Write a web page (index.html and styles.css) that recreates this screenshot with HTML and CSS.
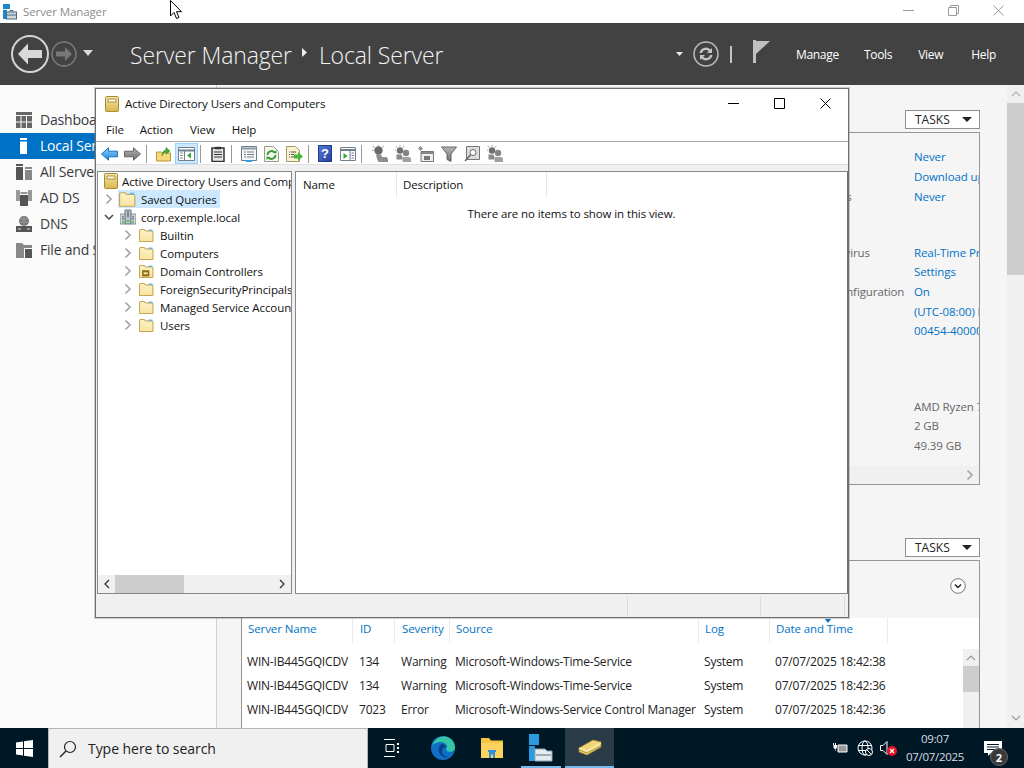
FILE: index.html
```html
<!DOCTYPE html>
<html lang="en">
<head>
<meta charset="utf-8">
<title>Server Manager</title>
<link rel="stylesheet" href="styles.css">
</head>
<body>
<svg class="defs" width="0" height="0" aria-hidden="true">
  <defs>
    <linearGradient id="gBook" x1="0" y1="0" x2="0" y2="1"><stop offset="0" stop-color="#f6e7a8"/><stop offset="1" stop-color="#d9b650"/></linearGradient>
    <linearGradient id="gFolder" x1="0" y1="0" x2="0" y2="1"><stop offset="0" stop-color="#fdf3c9"/><stop offset="1" stop-color="#f9e3a0"/></linearGradient>
    <linearGradient id="gBlue" x1="0" y1="0" x2="0" y2="1"><stop offset="0" stop-color="#8fd0fb"/><stop offset="1" stop-color="#1d86dc"/></linearGradient>
    <linearGradient id="gGrey" x1="0" y1="0" x2="0" y2="1"><stop offset="0" stop-color="#b5b5b5"/><stop offset="1" stop-color="#6f6f6f"/></linearGradient>
    <linearGradient id="gHelp" x1="0" y1="0" x2="1" y2="1"><stop offset="0" stop-color="#5a79d8"/><stop offset="1" stop-color="#23409c"/></linearGradient>
    <symbol id="folder" viewBox="1 1 14.500 12.500"><path d="M1.500 12.500V2.500q0-1 1-1h3.500l1.500 1.500h6q1 0 1 1v8.500q0 .5-.5.5H2q-.5 0-.5-.5z" fill="url(#gFolder)" stroke="#c8a64c"/><path d="M10 1.500h4v1.500h-4z" fill="#6fb2e6"/></symbol>
    <symbol id="book" viewBox="0 0 14 16"><rect x=".5" y=".5" width="13" height="15" rx="1" fill="url(#gBook)" stroke="#a98b34"/><rect x="3" y="3" width="8" height="3" fill="#fff8d8" stroke="#8a7430" stroke-width=".7"/></symbol>
    <symbol id="chevr" viewBox="0 0 8 12"><path d="M1.500 1.500 6 6l-4.500 4.500" fill="none" stroke="#a6a6a6" stroke-width="1.700"/></symbol>
    <symbol id="user" viewBox="0 0 16 17"><circle cx="6.500" cy="5.500" r="4.200" fill="#6a6a6a"/><path d="M2.500 2.500 .8.800M6.500 1V0M10.500 2.500l1.500-1.700M1.500 5.500H0" stroke="#9a9a9a"/><path d="M4 9.500h5l1 2.500h4.500q1.500 1 1.500 2.500V17H6.500L5 14z" fill="#8f8f8f"/></symbol>
    <symbol id="users" viewBox="0 0 16 17"><circle cx="5" cy="5.500" r="3.200" fill="#707070"/><circle cx="11" cy="8" r="3.200" fill="#858585"/><path d="M2 2.500 .8 1M5 1.500V0M8 2.500 9.200 1M1 5H0" stroke="#9a9a9a"/><path d="M1.500 9.500h5l1 3v2h-6z" fill="#8a8a8a"/><path d="M7.500 12h7q1.500.8 1.500 2.500V17H7.500z" fill="#a0a0a0"/></symbol>
  </defs>
</svg>

<div class="sm">
  <div class="sm-title">
    <svg class="sm-logo" width="14" height="18" viewBox="0 0 14 18"><path d="M0 2h7v5H0zM0 8h4v9H0z" fill="#1f86c9"/><rect x="3.500" y="10" width="10" height="7" fill="#cfd8df" stroke="#456c88"/><path d="M7 10V8.500h3V10" fill="none" stroke="#456c88"/><path d="M4 13h9" stroke="#456c88"/></svg>
    <span class="sm-title-text">Server Manager</span>
    <span class="grow"></span>
    <svg class="wc" width="11" height="11" viewBox="0 0 11 11"><path d="M0 5.500h11" stroke="#9a9a9a"/></svg>
    <svg class="wc" width="11" height="11" viewBox="0 0 11 11"><path d="M.5 2.500h8v8h-8zM2.500 2.500v-2h8v8h-2" fill="none" stroke="#9a9a9a"/></svg>
    <svg class="wc" width="11" height="11" viewBox="0 0 11 11"><path d="M.5.500l10 10M10.500.500l-10 10" stroke="#9a9a9a"/></svg>
  </div>

  <header class="sm-head">
    <svg class="nav-back" width="40" height="40" viewBox="0 0 40 40"><circle cx="20" cy="20" r="18" fill="none" stroke="#d4d4d4" stroke-width="2"/><path d="M8 20l10-10.500v6.500h14v8H18v6.500z" fill="#d9d9d9"/></svg>
    <svg class="nav-fwd" width="26" height="26" viewBox="0 0 26 26"><circle cx="13" cy="13" r="12" fill="none" stroke="#7a7a7a" stroke-width="1.500"/><path d="M21 13l-7-7v4.500H5v5h9V20z" fill="#777"/></svg>
    <svg class="nav-drop" width="10" height="6" viewBox="0 0 10 6"><path d="M0 0h10L5 6z" fill="#d8d8d8"/></svg>
    <h1 class="crumb">Server Manager<svg class="crumb-sep" width="5" height="9" viewBox="0 0 5 9"><path d="M0 0l5 4.500-5 4.500z" fill="#eee"/></svg>Local Server</h1>
    <span class="grow"></span>
    <svg class="rf-drop" width="7" height="4" viewBox="0 0 7 4"><path d="M0 0h7L3.500 4z" fill="#e8e8e8"/></svg>
    <svg class="refresh" width="26" height="26" viewBox="0 0 26 26"><circle cx="13" cy="13" r="12" fill="none" stroke="#bdbdbd" stroke-width="1.500"/><path d="M6.500 12a6.500 6.500 0 0 1 11-3.500l1.500-1.500v5h-5l1.800-1.800A4 4 0 0 0 9 12zM19.500 14a6.500 6.500 0 0 1-11 3.500L7 19v-5h5l-1.800 1.800A4 4 0 0 0 17 14z" fill="#c4c4c4"/></svg>
    <span class="head-bar"></span>
    <svg class="flag" width="17" height="23" viewBox="0 0 17 23"><path d="M0 0h3v23H0z" fill="#c0c0c0"/><path d="M3 1h14L3 14z" fill="#c0c0c0"/></svg>
    <nav class="head-menu"><span class="hm-manage">Manage</span><span class="hm-tools">Tools</span><span class="hm-view">View</span><span class="hm-help">Help</span></nav>
  </header>

  <div class="sm-body">
    <aside class="side">
      <div class="side-item">
        <svg width="16" height="16" viewBox="0 0 16 16"><path d="M0 0h16v3H0zM0 4h4.500v5.500H0zM5.500 4h4.500v5.500H5.500zM11 4h5v5.500h-5zM0 10.500h4.500V16H0zM5.500 10.500h4.500V16H5.500zM11 10.500h5V16h-5z" fill="#666"/></svg>
        <span>Dashboard</span>
      </div>
      <div class="side-item active">
        <svg width="16" height="16" viewBox="0 0 16 16"><path d="M4 0h7v2H4zM4 3.500h7V16H4z" fill="#fff"/></svg>
        <span>Local Server</span>
      </div>
      <div class="side-item">
        <svg width="16" height="16" viewBox="0 0 16 16"><path d="M0 0h7v2H0zM0 3h7v13H0z" fill="#555"/><path d="M9 3h7v2H9zM9 6h7v10H9z" fill="#888"/></svg>
        <span>All Servers</span>
      </div>
      <div class="side-item">
        <svg width="16" height="16" viewBox="0 0 16 16"><path d="M0 0h4v11H0zM12 0h4v11h-4zM4.500 2h7v2h-7z" fill="#999"/><path d="M4 5h8v11H4z" fill="#555"/></svg>
        <span>AD DS</span>
      </div>
      <div class="side-item">
        <svg width="16" height="16" viewBox="0 0 16 16"><circle cx="8" cy="5" r="5" fill="#777"/><path d="M4 3h8M3.500 6h9M8 0v10" stroke="#aaa" stroke-width=".7"/><path d="M0 10h16v6H0z" fill="#555"/><path d="M2 13h3M11 13h3" stroke="#ddd"/></svg>
        <span>DNS</span>
      </div>
      <div class="side-item">
        <svg width="16" height="16" viewBox="0 0 16 16"><path d="M0 1h6l2 2h8v3H8v10H0z" fill="#888"/><path d="M9 7h7v9H9z" fill="#555"/></svg>
        <span>File and Storage Services</span>
      </div>
    </aside>

    <main class="main">
      <div class="tasks-row"><span class="tasks">TASKS<i class="tasks-arrow"></i></span></div>
      <section class="panel props">
        <div class="props-body">
          <div class="info-row"><span>Last installed updates</span><span class="val">Never</span></div>
          <div class="info-row"><span>Windows Update</span><span class="val">Download updates only</span></div>
          <div class="info-row"><span>Last checked for updates</span><span class="val">Never</span></div>
          <div class="info-row gap-a"><span>Windows Defender Antivirus</span><span class="val">Real-Time Protection: On</span></div>
          <div class="info-row"><span>Feedback &amp; Diagnostics</span><span class="val">Settings</span></div>
          <div class="info-row"><span>IE Enhanced Security Configuration</span><span class="val">On</span></div>
          <div class="info-row"><span>Time zone</span><span class="val">(UTC-08:00) Pacific Time</span></div>
          <div class="info-row"><span>Product ID</span><span class="val">00454-40000-00001-AA</span></div>
          <div class="info-row gap-b"><span>Processors</span><span class="val plain">AMD Ryzen 7</span></div>
          <div class="info-row"><span>Installed memory (RAM)</span><span class="val plain">2 GB</span></div>
          <div class="info-row"><span>Total disk space</span><span class="val plain">49.39 GB</span></div>
        </div>
        <div class="props-scroll"><svg width="8" height="12"><use href="#chevr"/></svg></div>
      </section>

      <div class="tasks-row second"><span class="tasks">TASKS<i class="tasks-arrow"></i></span></div>
      <section class="panel events">
        <div class="events-top">
          <svg width="16" height="16" viewBox="0 0 16 16"><circle cx="8" cy="8" r="7.300" fill="#fff" stroke="#777"/><path d="M5 6.500l3 3 3-3" fill="none" stroke="#222" stroke-width="1.500"/></svg>
        </div>
        <div class="log-head">
          <span>Server Name</span><span>ID</span><span>Severity</span><span>Source</span><span>Log</span><span class="sorted">Date and Time</span>
        </div>
        <div class="log-main">
          <div class="log-rows">
            <div class="log-row"><span>WIN-IB445GQICDV</span><span>134</span><span>Warning</span><span>Microsoft-Windows-Time-Service</span><span>System</span><span>07/07/2025 18:42:38</span></div>
            <div class="log-row"><span>WIN-IB445GQICDV</span><span>134</span><span>Warning</span><span>Microsoft-Windows-Time-Service</span><span>System</span><span>07/07/2025 18:42:36</span></div>
            <div class="log-row"><span>WIN-IB445GQICDV</span><span>7023</span><span>Error</span><span>Microsoft-Windows-Service Control Manager</span><span>System</span><span>07/07/2025 18:42:36</span></div>
          </div>
          <div class="log-scroll">
            <svg class="up" width="10" height="6" viewBox="0 0 10 6"><path d="M1 5l4-4 4 4" fill="none" stroke="#9a9a9a" stroke-width="1.200"/></svg>
            <div class="log-thumb"></div>
          </div>
        </div>
      </section>
    </main>

    <div class="main-scroll">
      <svg class="up" width="10" height="6" viewBox="0 0 10 6"><path d="M1 5l4-4 4 4" fill="none" stroke="#b0b0b0" stroke-width="1.200"/></svg>
      <div class="main-thumb"></div>
      <span class="grow"></span>
      <svg class="down" width="10" height="6" viewBox="0 0 10 6"><path d="M1 1l4 4 4-4" fill="none" stroke="#9a9a9a" stroke-width="1.200"/></svg>
    </div>
  </div>
</div>

<div class="mmc">
  <div class="mmc-title">
    <svg width="14" height="16"><use href="#book"/></svg>
    <span class="mmc-title-text">Active Directory Users and Computers</span>
    <span class="grow"></span>
    <svg class="mwc" width="11" height="11" viewBox="0 0 11 11"><path d="M0 5.500h11" stroke="#000"/></svg>
    <svg class="mwc" width="11" height="11" viewBox="0 0 11 11"><path d="M.5.500h10v10H.5z" fill="none" stroke="#000"/></svg>
    <svg class="mwc" width="11" height="11" viewBox="0 0 11 11"><path d="M.5.500l10 10M10.500.500l-10 10" stroke="#000"/></svg>
  </div>
  <div class="mmc-menu"><span>File</span><span>Action</span><span>View</span><span>Help</span></div>
  <div class="toolbar">
    <span class="tb"><svg width="17" height="14" viewBox="0 0 17 14"><path d="M.5 7 7.500 .8v3.400H16.500v5.600H7.500v3.400z" fill="url(#gBlue)" stroke="#1a6fbe"/></svg></span>
    <span class="tb"><svg width="17" height="14" viewBox="0 0 17 14"><path d="M16.500 7 9.500 .8v3.400H.5v5.600h9v3.400z" fill="url(#gGrey)" stroke="#666"/></svg></span>
    <i class="sep"></i>
    <span class="tb"><svg width="16" height="16" viewBox="0 0 16 16"><path d="M.5 15V6h5l1 1h8v8z" fill="#f5d878" stroke="#b8963a"/><path d="M6 10c0-4 2-6 4-6V1.500L14 5l-4 3V6c-1.500 0-3 1-4 4z" fill="#3fae35" stroke="#2a7f24" stroke-width=".5"/></svg></span>
    <span class="tb on"><svg width="17" height="14" viewBox="0 0 17 14"><path d="M.5.500h16v13H.5z" fill="#fff" stroke="#6f7f8c"/><path d="M.5 3.500h16" stroke="#6f7f8c" stroke-width="2"/><path d="M6.500 4v9" stroke="#6f7f8c"/><path d="M2 6h3M2 8.500h3M2 11h3" stroke="#889"/><path d="M13 5.500v6L9 8.500z" fill="#2ea836"/></svg></span>
    <i class="sep"></i>
    <span class="tb"><svg width="14" height="16" viewBox="0 0 14 16"><path d="M1 2h12v13.500H1z" fill="#e8e8e8" stroke="#333" stroke-width="1.500"/><path d="M4 .8h6v2.500H4z" fill="#333"/><path d="M3 6h8M3 8.500h8M3 11h8" stroke="#333"/></svg></span>
    <i class="sep"></i>
    <span class="tb"><svg width="16" height="16" viewBox="0 0 16 16"><path d="M.5.500h15v14h-15z" fill="#f4f6f8" stroke="#6d7c88"/><path d="M.5 2.500h15" stroke="#8a98a3" stroke-width="2"/><path d="M3 6h2M6 6h7M3 8.500h2M6 8.500h7M3 11h2M6 11h7" stroke="#778"/><path d="M5 15h6" stroke="#2aa0e0" stroke-width="2"/></svg></span>
    <span class="tb"><svg width="15" height="16" viewBox="0 0 15 16"><path d="M.5.500h9l5 5v10h-14z" fill="#f7f7f0" stroke="#9a9a8c"/><path d="M3.500 9a4 4 0 0 1 7-2.500M11.500 9a4 4 0 0 1-7 2.500" fill="none" stroke="#33a035" stroke-width="2"/><path d="M9 7l3.500.5V4zM6 11l-3.500-.5V14z" fill="#33a035"/></svg></span>
    <span class="tb"><svg width="17" height="16" viewBox="0 0 17 16"><path d="M.5.500h9l4 4v11h-13z" fill="#f8f2d0" stroke="#a39a6a"/><path d="M3 6h1M5 6h5M3 8.500h1M5 8.500h3M3 11h1M5 11h3" stroke="#555"/><path d="M8 8.500h4V6l5 4.500-5 4.500v-2.500H8z" fill="#49b83a"/></svg></span>
    <i class="sep narrow"></i>
    <span class="tb"><svg width="14" height="17" viewBox="0 0 14 17"><rect x=".5" y=".5" width="13" height="16" fill="url(#gHelp)" stroke="#1f3a8f"/><text x="7" y="13" class="qmark">?</text></svg></span>
    <span class="tb"><svg width="16" height="14" viewBox="0 0 16 14"><path d="M.5.500h15v13H.5z" fill="#fff" stroke="#6f7f8c"/><path d="M.5 3h15" stroke="#6f7f8c" stroke-width="2"/><path d="M10 4v9" stroke="#6f7f8c"/><path d="M3.500 6l4 3-4 3z" fill="#2ea836"/><path d="M11.500 6h2.500M11.500 8.500h2.500M11.500 11h2.500" stroke="#778"/></svg></span>
    <i class="sep wide"></i>
    <span class="tb"><svg width="16" height="17"><use href="#user"/></svg></span>
    <span class="tb"><svg width="16" height="17"><use href="#users"/></svg></span>
    <span class="tb"><svg width="16" height="16" viewBox="0 0 16 16"><path d="M3 5.500h12.500v10H3z" fill="#eee" stroke="#777"/><path d="M3 7h12.500" stroke="#888" stroke-width="2"/><path d="M6 10h6v4H6z" fill="#777"/><path d="M2.500 0v5M0 2.500h5M.8.800l3.400 3.400M4.200.800.800 4.200" stroke="#999"/></svg></span>
    <span class="tb"><svg width="16" height="16" viewBox="0 0 16 16"><path d="M.5 1h15L10 8v7.500L6 13.500V8z" fill="url(#gGrey)" stroke="#666"/></svg></span>
    <span class="tb"><svg width="16" height="16" viewBox="0 0 16 16"><path d="M2.500.500h13v13h-13z" fill="#ddd" stroke="#777"/><circle cx="9" cy="6.500" r="3" fill="#fff" stroke="#666"/><path d="M6.500 9 1 15" stroke="#666" stroke-width="1.500"/></svg></span>
    <span class="tb"><svg width="16" height="17"><use href="#users"/></svg></span>
  </div>
  <div class="mmc-panes">
    <div class="tree">
      <div class="tree-scrollarea">
        <div class="tree-row root"><svg width="14" height="16"><use href="#book"/></svg><span>Active Directory Users and Computers</span></div>
        <div class="tree-row lvl1"><svg class="chev" width="8" height="12"><use href="#chevr"/></svg><span class="sel"><svg width="17" height="15"><use href="#folder"/></svg><span>Saved Queries</span></span></div>
        <div class="tree-row lvl1"><svg class="chev open" width="10" height="12" viewBox="0 0 10 12"><path d="M1 4l4 4 4-4" fill="none" stroke="#444" stroke-width="1.500"/></svg><span class="item"><svg width="16" height="16" viewBox="0 0 16 16"><path d="M5 1h6v14H5z" fill="#b9c4c9" stroke="#6a7a80"/><path d="M0 5h5v10H0zM11 5h5v10h-5z" fill="#cfd8dc" stroke="#6a7a80" stroke-width=".8"/><path d="M7 3h2M7 5h2M7 7h2M2 8h2M12 8h2M2 10h2M12 10h2" stroke="#456"/><path d="M2 13h2M7 12h2M12 13h2" stroke="#3fc23a" stroke-width="1.500"/></svg><span>corp.exemple.local</span></span></div>
        <div class="tree-row lvl2"><svg class="chev" width="8" height="12"><use href="#chevr"/></svg><svg width="15" height="13"><use href="#folder"/></svg><span>Builtin</span></div>
        <div class="tree-row lvl2"><svg class="chev" width="8" height="12"><use href="#chevr"/></svg><svg width="15" height="13"><use href="#folder"/></svg><span>Computers</span></div>
        <div class="tree-row lvl2"><svg class="chev" width="8" height="12"><use href="#chevr"/></svg><svg width="15" height="13" viewBox="1 1 14.500 12.500"><use href="#folder" x="1" y="1" width="14.500" height="12.500"/><path d="M4 6h7v6H4z" fill="#8a6d1a"/><path d="M5.500 8h4v2h-4z" fill="#f3df9a"/></svg><span>Domain Controllers</span></div>
        <div class="tree-row lvl2"><svg class="chev" width="8" height="12"><use href="#chevr"/></svg><svg width="15" height="13"><use href="#folder"/></svg><span>ForeignSecurityPrincipals</span></div>
        <div class="tree-row lvl2"><svg class="chev" width="8" height="12"><use href="#chevr"/></svg><svg width="15" height="13"><use href="#folder"/></svg><span>Managed Service Accounts</span></div>
        <div class="tree-row lvl2"><svg class="chev" width="8" height="12"><use href="#chevr"/></svg><svg width="15" height="13"><use href="#folder"/></svg><span>Users</span></div>
      </div>
      <div class="tree-hscroll">
        <svg width="6" height="10" viewBox="0 0 6 10"><path d="M5 1 1 5l4 4" fill="none" stroke="#333" stroke-width="1.300"/></svg>
        <div class="tree-thumb"></div>
        <span class="grow"></span>
        <svg width="6" height="10" viewBox="0 0 6 10"><path d="M1 1l4 4-4 4" fill="none" stroke="#333" stroke-width="1.300"/></svg>
      </div>
    </div>
    <div class="list">
      <div class="list-head"><span class="lh-name">Name</span><span class="lh-desc">Description</span></div>
      <p class="list-empty">There are no items to show in this view.</p>
    </div>
  </div>
  <div class="mmc-status"><span class="st-a"></span><span class="st-b"></span><span class="st-c"></span></div>
</div>

<footer class="taskbar">
  <div class="start"><svg width="17" height="17" viewBox="0 0 17 17"><path d="M0 2.400 7 1.400v6.600H0zM8 1.200 17 0v8H8zM0 9h7v6.600L0 14.600zM8 9h9v8l-9-1.200z" fill="#fff"/></svg></div>
  <div class="search">
    <svg width="18" height="18" viewBox="0 0 18 18"><circle cx="11" cy="7" r="5.500" fill="none" stroke="#222" stroke-width="1.200"/><path d="M7 11 1 17" stroke="#222" stroke-width="1.400"/></svg>
    <span>Type here to search</span>
  </div>
  <div class="tk tk-view"><svg width="17" height="18" viewBox="0 0 17 18"><path d="M1 .5h11M1 17.500h11M3 5.500h8v7H3z" fill="none" stroke="#fff"/><path d="M14 4h2v2h-2zM14 8h2v2h-2zM14 12h2v2h-2z" fill="#fff"/></svg></div>
  <div class="tk edge"><svg width="24" height="24" viewBox="0 0 24 24"><circle cx="12" cy="12" r="12" fill="#0f6fc4"/><path d="M1 10C3 3 9 0 14 .5c6 .5 10 5.500 10 11 0 4-4 5-7 4-2-.7-2.500-3-1-4 .5-3-3-6-7-5.500S2 8 1 10z" fill="#35c6a8"/><path d="M11 8c-3 1-4 5-3 8 1 3 5 7 11 5-5 .5-8-2-8-6 0-3 2-4 4-4-1-2-2-3-4-3z" fill="#0b3f86"/></svg></div>
  <div class="tk"><svg width="22" height="20" viewBox="0 0 22 20"><path d="M0 0h8l2 2.500h12V20H0z" fill="#f5c640"/><path d="M0 5h22v15H0z" fill="#fbd35c"/><path d="M8 14h6v6h-2v-3.500h-2V20H8z" fill="#2f8fe0"/><path d="M7 12h8v2H7z" fill="#2f8fe0"/></svg></div>
  <div class="tk run"><svg width="24" height="28" viewBox="0 0 24 28"><path d="M0 0h10v11H0zM0 12h6v15H0z" fill="#2a9be0"/><path d="M6 15h10l2 2h5v10H6z" fill="#e4ecf2" stroke="#8fa4b4"/><path d="M7 21h15" stroke="#556c7e"/></svg></div>
  <div class="tk run active"><svg width="24" height="18" viewBox="0 0 24 18"><path d="M1 9 15 1l8 2v5L9 16 1 13z" fill="#f0d67a" stroke="#a4892f" stroke-width=".8"/><path d="M1 9l8 3 14-8" fill="none" stroke="#fff6c8"/><path d="M1 11l8 3 14-7" fill="none" stroke="#b39a45"/></svg></div>
  <span class="grow"></span>
  <div class="tray">
    <svg class="t-bat" width="16" height="13" viewBox="0 0 16 13"><path d="M0 3h1v-2h1v2h1v-2h1v2h1v3l-1.500 1v2H3V7L1.500 6V3z" fill="#fff"/><path d="M6 3h9v7H6z" fill="#9a9a9a" stroke="#fff"/></svg>
    <svg class="t-net" width="16" height="16" viewBox="0 0 16 16"><g fill="none" stroke="#fff"><circle cx="8" cy="8" r="7"/><ellipse cx="8" cy="8" rx="3" ry="7"/><path d="M1 5.500h14M1 10.500h14"/></g><circle cx="12" cy="12" r="3.500" fill="#001826" stroke="#fff"/><path d="M10 10l4 4" stroke="#fff"/></svg>
    <svg class="t-vol" width="17" height="16" viewBox="0 0 17 16"><path d="M.5 5.500h2.500L7 1.500v13L3 10.500H.5z" fill="none" stroke="#fff"/><circle cx="12" cy="11" r="5" fill="#e81123"/><path d="M10 9l4 4M14 9l-4 4" stroke="#fff" stroke-width="1.300"/></svg>
    <div class="clock"><span>09:07</span><span>07/07/2025</span></div>
    <div class="notify">
      <svg width="18" height="15" viewBox="0 0 18 15"><path d="M0 0h18v12H7l-3 3v-3H0z" fill="#fff"/><path d="M3 3.500h12M3 6h12M3 8.500h8" stroke="#001826"/></svg>
      <span class="badge">2</span>
    </div>
  </div>
</footer>

<svg class="cursor" width="13" height="20" viewBox="0 0 13 20"><path d="M.5.500v15.500l3.500-3.500 2.500 6 2.500-1-2.500-5.800h5z" fill="#fff" stroke="#000"/></svg>
</body>
</html>
```
FILE: styles.css
```css
* { box-sizing: border-box; }
html, body { margin: 0; height: 100%; }
body {
  width: 1024px; height: 768px; overflow: hidden; position: relative;
  font-family: "Open Sans", "Noto Sans", "Liberation Sans", sans-serif;
  font-size: 11.5px; letter-spacing: -.1px; color: #222; background: #fff;
}
.defs { position: absolute; }
.grow { flex: 1; }
svg { display: block; flex: none; }

.sm { height: 728px; display: flex; flex-direction: column; }
.sm-title { height: 23px; display: flex; align-items: center; padding-left: 3px; background: #fff; }
.sm-logo { margin-top: -1px; }
.sm-title-text { margin-left: 6px; color: #8c8c8c; }
.wc { margin-right: 34px; margin-top: -2px; }
.wc:last-child { margin-right: 20px; }

.sm-head { height: 62px; background: #424242; display: flex; align-items: center; color: #fff; flex: none; }
.nav-back { margin-left: 10px; }
.nav-fwd { margin-left: 1px; }
.nav-drop { margin-left: 6px; margin-top: -2px; }
.crumb { margin: 0 0 0 37px; padding-top: 2px; font-size: 23px; font-weight: 300; display: flex; align-items: center; color: #f2f2f2; letter-spacing: -.12px; white-space: nowrap; }
.crumb-sep { margin: -5px 12px 0 10px; }
.refresh { margin-left: 10px; }
.head-bar { width: 2px; height: 17px; background: #c4c4c4; margin-left: 11px; }
.flag { margin-left: 21px; margin-top: -5px; }
.head-menu { display: flex; margin-left: 26px; margin-right: 28px; font-size: 12px; letter-spacing: -.3px; }
.hm-manage { margin-right: 25px; }
.hm-tools { margin-right: 26px; }
.hm-view { margin-right: 28px; }

.sm-body { flex: 1; display: flex; min-height: 0; }
.side { width: 217px; flex: none; background: #fafafa; border-right: 1px solid #d2d2d2; padding-top: 22px; }
.side-item { height: 26px; display: flex; align-items: center; gap: 8px; padding-left: 16px; font-size: 14px; color: #3a3a3a; white-space: nowrap; letter-spacing: -.2px; }
.side-item span { margin-top: -1px; }
.side-item.active { background: #0072c6; color: #fff; }

.main { flex: 1; min-width: 0; background: #f5f5f5; padding: 25px 27px 0 24px; overflow: hidden; display: flex; flex-direction: column; }
.tasks-row { display: flex; justify-content: flex-end; flex: none; }
.tasks-row.second { margin-top: 53px; }
.tasks { width: 75px; height: 19px; border: 1px solid #8f8f8f; background: #fff; display: flex; align-items: center; padding-left: 9px; color: #222; font-size: 12px; letter-spacing: 0; position: relative; }
.tasks-arrow { position: absolute; right: 7px; top: 6px; width: 0; height: 0; border: 5px solid transparent; border-top: 5px solid #222; border-bottom: 0; }

.panel { border: 1px solid #969696; margin-top: 3px; background: #f5f5f5; flex: none; }
.props { height: 353px; display: flex; flex-direction: column; }
.props-body { flex: 1; padding-top: 14px; color: #666; overflow: hidden; }
.info-row { display: grid; grid-template-columns: 194px 65px; height: 19.7px; align-items: center; padding-left: 478px; white-space: nowrap; }
.info-row span { overflow: hidden; }
.val { color: #0072c6; }
.val.plain { color: #666; }
.gap-a { margin-top: 36.2px; }
.gap-b { margin-top: 55.5px; }
.props-scroll { height: 18px; background: #f0f0f0; display: flex; justify-content: flex-end; align-items: center; padding-right: 5px; }

.events { height: 170px; flex: none; border-bottom: 0; overflow: hidden; }
.events-top { height: 57px; display: flex; justify-content: flex-end; align-items: center; padding: 0 13px 7px 0; }
.log-head, .log-row { display: grid; grid-template-columns: 111px 42px 55px 249px 71px 118px 1fr; white-space: nowrap; }
.log-head { height: 31px; background: #fff; color: #0072c6; align-items: start; }
.log-head span { padding: 0 0 0 7px; height: 25px; line-height: 22px; border-right: 1px solid #eaeaea; }
.log-head span:first-child { padding-left: 6px; }
.log-head span:nth-child(n+4) { padding-left: 6px; }
.sorted { position: relative; }
.sorted::before { content: ""; position: absolute; left: 55px; top: 1px; border: 3px solid transparent; border-top: 4px solid #0072c6; border-bottom: 0; }
.log-main { display: flex; height: 82px; background: #fff; }
.log-rows { flex: 1; min-width: 0; overflow: hidden; }
.log-row { height: 24px; align-items: center; color: #222; font-size: 12px; letter-spacing: -.2px; }
.log-row span { padding-left: 6px; overflow: hidden; }
.log-row span:first-child { padding-left: 5px; }
.log-row span:nth-child(n+4) { padding-left: 5px; }
.log-scroll { width: 16px; flex: none; background: #f0f0f0; display: flex; flex-direction: column; align-items: center; padding-top: 6px; }
.log-thumb { width: 16px; height: 26px; background: #cdcdcd; margin-top: 5px; }

.main-scroll { width: 17px; flex: none; background: #f0f0f0; display: flex; flex-direction: column; align-items: center; padding: 6px 0 7px; }
.main-thumb { width: 17px; height: 172px; background: #cdcdcd; margin-top: 6px; }

.mmc { position: absolute; left: 95px; top: 88px; width: 754px; height: 530px; border: 1px solid #6d6d6d; background: #f0f0f0; display: flex; flex-direction: column; box-shadow: 0 0 0 1px rgba(120,120,120,.35); }
.mmc-title { height: 29px; flex: none; background: #fff; display: flex; align-items: center; padding-left: 9px; }
.mmc-title-text { margin-left: 6px; color: #111; }
.mwc { margin-right: 35px; }
.mwc:last-child { margin-right: 17px; }
.mmc-menu { height: 24px; flex: none; background: #fff; display: flex; align-items: center; padding-left: 10px; border-bottom: 1px solid #a8a8b0; color: #111; }
.mmc-menu span:nth-child(1) { margin-right: 16px; }
.mmc-menu span:nth-child(2) { margin-right: 17px; }
.mmc-menu span:nth-child(3) { margin-right: 17px; }
.toolbar { height: 23px; flex: none; background: #fff; display: flex; align-items: center; padding: 1px 0 0 2px; border-bottom: 1px solid #e0e0e0; }
.tb { width: 23px; height: 21px; display: flex; align-items: center; justify-content: center; }
.tb.on { background: #cce8ff; border: 1px solid #99d1ff; }
.sep { width: 1px; height: 18px; background: #9a9a9a; margin: 0 5px 0 2px; flex: none; }
.sep.narrow { margin: 0 4px 0 2px; }
.sep.wide { margin: 0 6px 0 2px; }
.qmark { fill: #fff; font-size: 13px; font-weight: 700; text-anchor: middle; font-family: "Liberation Sans", sans-serif; }

.mmc-panes { height: 423px; flex: none; display: flex; margin-top: 6px; padding-left: 1px; gap: 3px; }
.tree { width: 195px; flex: none; background: #fff; border: 1px solid #828790; display: flex; flex-direction: column; }
.tree-scrollarea { flex: 1; overflow: hidden; }
.tree-row { height: 18px; display: flex; align-items: center; white-space: nowrap; color: #111; }
.tree-row span { min-width: 0; overflow: hidden; }
.root { padding-left: 6px; gap: 4px; }
.lvl1 { padding-left: 7px; }
.lvl1 .chev { margin-right: 5px; }
.sel { display: flex; align-items: center; gap: 5px; background: #cce8ff; padding: 0 3px 0 1px; height: 18px; flex: none; }
.item { display: flex; align-items: center; gap: 5px; margin-left: 2px; }
.lvl1 .chev.open { margin-left: -1px; margin-right: 4px; }
.lvl2 { padding-left: 26px; }
.lvl2 .chev { margin-right: 7px; }
.lvl2 span { margin-left: 6px; }
.tree-hscroll { height: 18px; flex: none; background: #f0f0f0; display: flex; align-items: center; padding: 0 6px; }
.tree-thumb { width: 69px; height: 18px; background: #cdcdcd; margin-left: 5px; }
.list { flex: 1; min-width: 0; background: #fff; border: 1px solid #828790; border-right-color: #6d6d6d; }
.list-head { height: 25px; display: flex; align-items: center; color: #111; }
.lh-name { width: 101px; height: 100%; padding-left: 7px; line-height: 25px; border-right: 1px solid #e6e6e6; }
.lh-desc { width: 150px; height: 100%; padding-left: 6px; line-height: 25px; border-right: 1px solid #e6e6e6; }
.list-empty { margin: 9px 0 0; text-align: center; color: #111; }
.mmc-status { flex: 1; display: grid; grid-template-columns: 532px 133px 84px; margin-top: 1px; padding: 1px 0; background: #f0f0f0; }
.mmc-status span { border-right: 1px solid #dcdcdc; }

.taskbar { position: absolute; left: 0; right: 0; bottom: 0; height: 40px; background: #001826; display: flex; color: #fff; }
.start { width: 48px; display: flex; align-items: center; justify-content: center; }
.search { width: 320px; background: #f0f0f0; border: 1px solid #b5b5b5; border-width: 1px 1px 0 1px; display: flex; align-items: center; gap: 11px; padding-left: 10px; color: #222; font-size: 14px; letter-spacing: -.05px; }
.tk { width: 49px; display: flex; align-items: center; justify-content: center; position: relative; }
.tk-view svg { margin-left: -2px; }
.tk.edge { margin-left: 1px; }
.tk.run::after { content: ""; position: absolute; left: 5px; right: 4px; bottom: 0; height: 2px; background: #76b9ed; }
.tk.active { background: #2b3c49; }
.tk.active::after { left: 0; right: 0; }
.tray { display: flex; align-items: center; }
.t-bat { margin-right: 9px; }
.t-net { margin-right: 7px; }
.clock { width: 76px; display: flex; flex-direction: column; align-items: center; color: #d9dde0; font-size: 11.5px; letter-spacing: -.3px; line-height: 18px; }
.notify { width: 51px; position: relative; padding-left: 11px; padding-top: 1px; }
.badge { position: absolute; left: 17px; top: 8px; width: 18px; height: 18px; border-radius: 50%; background: #3a3a3a; border: 1px solid #666; color: #fff; font-size: 11px; font-weight: 700; letter-spacing: 0; display: flex; align-items: center; justify-content: center; }

.cursor { position: absolute; left: 170px; top: 0; }
```
